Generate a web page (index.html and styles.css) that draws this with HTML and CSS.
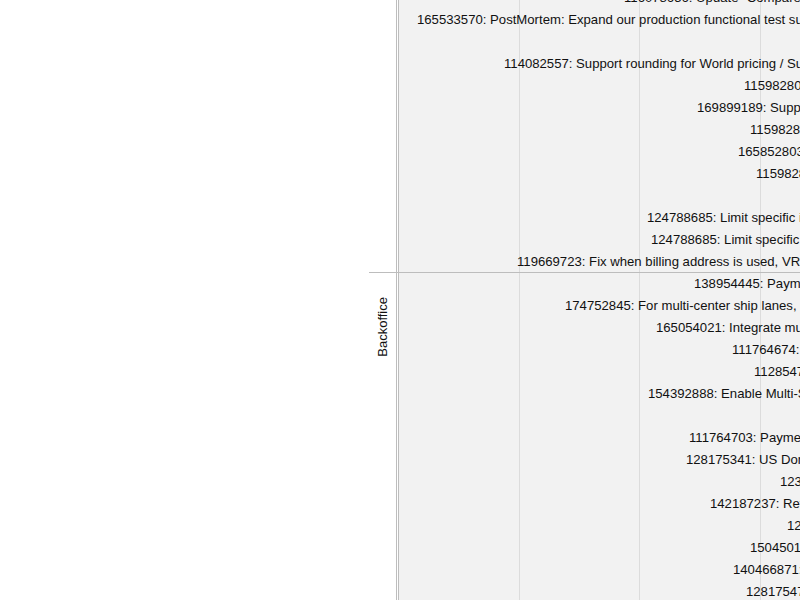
FILE: index.html
```html
<!DOCTYPE html>
<html lang="en">
<head>
  <meta charset="UTF-8" />
  <title>Roadmap</title>
  <link rel="stylesheet" href="styles.css">
</head>
<body>
  <div class="page">
    <div class="side"></div>
    <div class="board">
      <!-- Checkout -->
      <div class="group group-top">
        <div class="group-label"></div>
        <div class="lanes">
          <div class="row" style="padding-left:225px">116078656: Update "Compare prices" page for new tax rules</div>
          <div class="row" style="padding-left:18px">165533570: PostMortem: Expand our production functional test suite</div>
          <div class="row"></div>
          <div class="row" style="padding-left:105px">114082557: Support rounding for World pricing / Subscriptions</div>
          <div class="row" style="padding-left:345px">115982801: Cart</div>
          <div class="row" style="padding-left:298px">169899189: Support gift cards</div>
          <div class="row" style="padding-left:351px">115982802: Cart</div>
          <div class="row" style="padding-left:339px">165852803: Cart</div>
          <div class="row" style="padding-left:357px">115982804: Cart</div>
          <div class="row"></div>
          <div class="row" style="padding-left:248px">124788685: Limit specific items</div>
          <div class="row" style="padding-left:252px">124788685: Limit specific items</div>
          <div class="row" style="padding-left:118px">119669723: Fix when billing address is used, VRF</div>
        </div>
      </div>
      <!-- Backoffice -->
      <div class="group">
        <div class="group-label"><span>Backoffice</span></div>
        <div class="lanes">
          <div class="row" style="padding-left:295px">138954445: Payments</div>
          <div class="row" style="padding-left:166px">174752845: For multi-center ship lanes, use</div>
          <div class="row" style="padding-left:257px">165054021: Integrate multi</div>
          <div class="row" style="padding-left:333px">111764674: Orders</div>
          <div class="row" style="padding-left:355px">112854701: Orders</div>
          <div class="row" style="padding-left:249px">154392888: Enable Multi-Site</div>
          <div class="row"></div>
          <div class="row" style="padding-left:290px">111764703: Payments</div>
          <div class="row" style="padding-left:287px">128175341: US Domestic</div>
          <div class="row" style="padding-left:381px">123456789: Tax</div>
          <div class="row" style="padding-left:311px">142187237: Refunds</div>
          <div class="row" style="padding-left:388px">128175342: Tax</div>
          <div class="row" style="padding-left:351px">150450199: Tax</div>
          <div class="row" style="padding-left:334px">140466871: Tax</div>
          <div class="row" style="padding-left:347px">128175471: Tax</div>
        </div>
      </div>
    </div>
  </div>
</body>
</html>
```

FILE: styles.css
```css
* { box-sizing: border-box; }
html, body {
  margin: 0;
  height: 100%;
  overflow: hidden;
  background: #fff;
}
body {
  font-family: "Liberation Sans", Arial, sans-serif;
  font-size: 13.15px;
  color: #111;
}
.page {
  display: flex;
  width: 800px;
  height: 600px;
  overflow: hidden;
}
.side {
  width: 369px;
  flex: none;
}
.board {
  flex: 1;
  margin-top: -14px;
  min-width: 0;
}
.group {
  display: flex;
}
.group-top {
  border-bottom: 1px solid #bdbdbd;
}
.group-top .lanes {
  padding-top: 1px;
}
.group-top .row:last-child {
  height: 21px;
}
.group-label {
  width: 28px;
  flex: none;
  border-right: 1px solid #bdbdbd;
  display: flex;
  justify-content: center;
  align-items: flex-start;
}
.group-label span {
  margin-top: 24px;
  writing-mode: vertical-rl;
  transform: rotate(180deg);
  font-size: 13px;
  color: #111;
}
.lanes {
  flex: 1;
  min-width: 0;
  margin-left: 1px;
  border-left: 1px solid #bdbdbd;
  background-color: #f2f2f2;
  background-image: linear-gradient(to right,
    transparent 120px, #dcdcdc 120px, #dcdcdc 121px, transparent 121px,
    transparent 240px, #dcdcdc 240px, #dcdcdc 241px, transparent 241px,
    transparent 361px, #dcdcdc 361px, #dcdcdc 362px, transparent 362px);
}
.row {
  height: 22px;
  line-height: 22px;
  white-space: nowrap;
  overflow: hidden;
}
```
